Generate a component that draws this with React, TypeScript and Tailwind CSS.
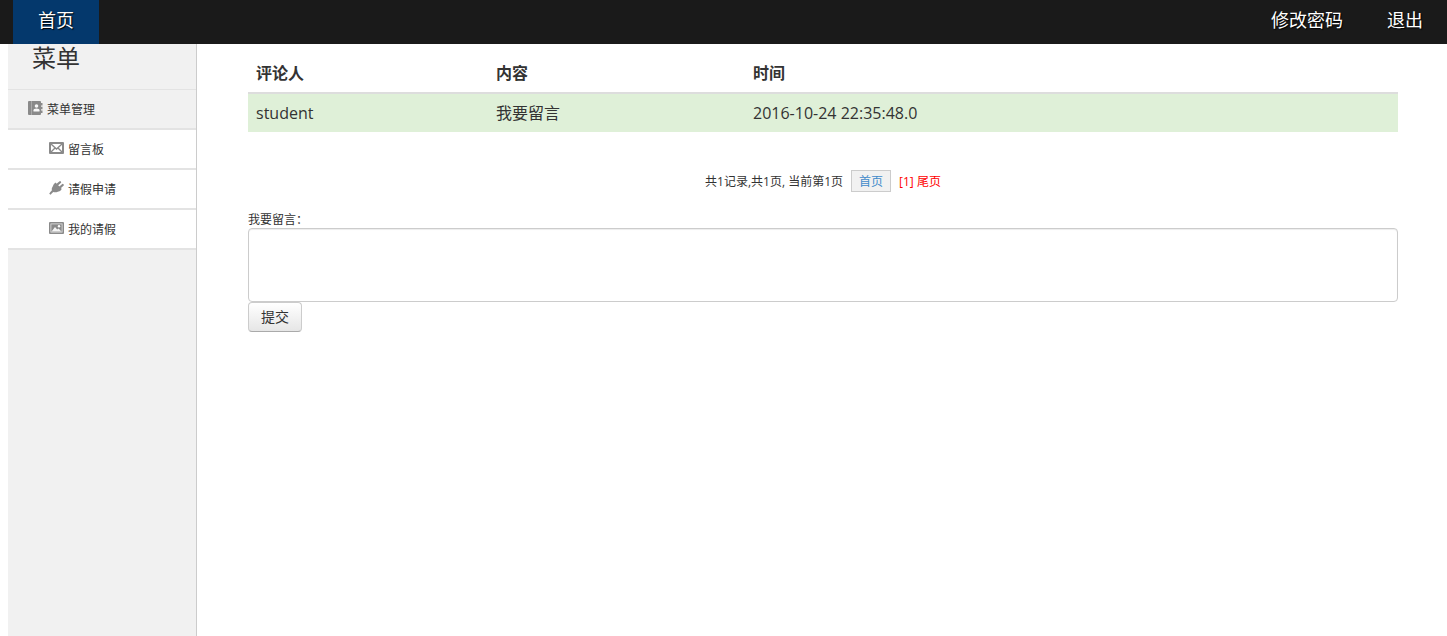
import { useState } from 'react'
import type { ReactNode } from 'react'

type MenuItem = { label: string; icon: ReactNode }
type Comment = { author: string; content: string; time: string }

const comments: Comment[] = [
  { author: 'student', content: '我要留言', time: '2016-10-24 22:35:48.0' },
]

const BookIcon = () => (
  <svg viewBox="0 0 15 14" className="mb-0.5 h-3.5 w-[15px] shrink-0" aria-hidden="true">
    <path
      d="M1 0H12Q13 0 13 1V2H14.5V4.5H13V5.7H14.5V8.3H13V9.5H14.5V12H13V13Q13 14 12 14H1Q0 14 0 13V1Q0 0 1 0Z"
      fill="#8a8a8a"
    />
    <path d="M3.5 0V14" stroke="#b8b8b8" strokeWidth="0.7" />
    <circle cx="8.5" cy="5" r="1.8" fill="#f8f8f8" />
    <path d="M5.5 10.5V9.3Q5.5 7.4 8.5 7.4Q11.5 7.4 11.5 9.3V10.5Z" fill="#f8f8f8" />
  </svg>
)

const MailIcon = () => (
  <svg viewBox="0 0 15 12" className="mb-0.5 h-3 w-[15px] shrink-0" aria-hidden="true">
    <rect width="15" height="12" rx="1" fill="#8a8a8a" />
    <rect x="2" y="2" width="11" height="8" fill="#fff" />
    <path d="M2 2L7.5 7L13 2M2 10L6 6M13 10L9 6" stroke="#8a8a8a" strokeWidth="1.4" fill="none" />
  </svg>
)

const PlugIcon = () => (
  <svg viewBox="0 0 15 14" className="mb-0.5 h-3.5 w-[15px] shrink-0" aria-hidden="true">
    <path
      d="M6.5 1.6L12.8 7.9Q11.5 10.4 8.8 10.7Q6.4 11.8 4.3 11Q2.8 12 1.7 13.8L0.2 12.7Q1.2 10.6 2.8 9.4Q2.4 7.3 3.7 5.6Q4.4 3 6.5 1.6Z"
      fill="#8a8a8a"
    />
    <path d="M8.3 3.6L11 1.2M11 6.4L13.7 4" stroke="#8a8a8a" strokeWidth="2.2" strokeLinecap="round" />
  </svg>
)

const PictureIcon = () => (
  <svg viewBox="0 0 15 12" className="mb-0.5 h-3 w-[15px] shrink-0" aria-hidden="true">
    <rect width="15" height="12" rx="1" fill="#8a8a8a" />
    <rect x="1.9" y="1.9" width="11.2" height="8.2" fill="none" stroke="#e4e4e4" strokeWidth="0.8" />
    <path d="M2.6 9.6L6 5L8.2 7.6L9.6 6.6L12.4 9.6Z" fill="#f4f4f4" />
    <circle cx="10" cy="4.3" r="1.2" fill="#fff" />
  </svg>
)

const menuItems: MenuItem[] = [
  { label: '留言板', icon: <MailIcon /> },
  { label: '请假申请', icon: <PlugIcon /> },
  { label: '我的请假', icon: <PictureIcon /> },
]

function NavBar() {
  return (
    <nav className="flex h-11 items-stretch justify-between bg-[#1a1a1a] pr-0.5 pl-[13px] text-lg text-white [text-shadow:1px_1px_1px_#000]">
      <a href="#home" className="flex items-center bg-[#04386c] px-[25px] pb-1">
        首页
      </a>
      <div className="flex">
        <a href="#password" className="flex items-center px-[22px] pb-1">
          修改密码
        </a>
        <a href="#logout" className="flex items-center px-[22px] pb-1">
          退出
        </a>
      </div>
    </nav>
  )
}

function SideBar() {
  return (
    <aside className="ml-2 w-[189px] shrink-0 border-r border-[#ccc] bg-[#f1f1f1]">
      <h2 className="border-b border-[#e3e3e3] pb-[18px] pl-6 text-2xl leading-[27px]">菜单</h2>
      <a
        href="#menu"
        className="flex h-10 items-center gap-1 border-b-2 border-[#e3e3e3] pl-5 text-xs"
      >
        <BookIcon />
        <span className="pt-0.5">菜单管理</span>
      </a>
      <ul>
        {menuItems.map((item) => (
          <li key={item.label}>
            <a
              href={`#${item.label}`}
              className="flex h-10 items-center gap-1 border-b-2 border-[#e3e3e3] bg-white pl-[41px] text-xs"
            >
              {item.icon}
              <span className="pt-0.5">{item.label}</span>
            </a>
          </li>
        ))}
      </ul>
    </aside>
  )
}

function CommentTable() {
  return (
    <table className="w-full table-fixed text-left text-base leading-[22px]">
      <thead>
        <tr className="border-b-2 border-[#ddd]">
          <th className="w-60 p-2 font-bold">评论人</th>
          <th className="w-[257px] p-2 font-bold">内容</th>
          <th className="p-2 font-bold">时间</th>
        </tr>
      </thead>
      <tbody>
        {comments.map((comment) => (
          <tr key={comment.time} className="bg-[#dff0d8]">
            <td className="p-2">{comment.author}</td>
            <td className="p-2">{comment.content}</td>
            <td className="p-2">{comment.time}</td>
          </tr>
        ))}
      </tbody>
    </table>
  )
}

function Pagination() {
  return (
    <div className="mt-[38px] flex items-center justify-center text-xs">
      <span className="pt-0.5">共1记录,共1页, 当前第1页</span>
      <a
        href="#first"
        className="mx-2 flex h-[22px] items-center border border-[#ccc] bg-[#f1f1f1] px-[7px] pt-0.5 text-[#428bca]"
      >
        首页
      </a>
      <span className="pt-0.5 text-[#f00]">
        [1]{' '}
        <a href="#last">尾页</a>
      </span>
    </div>
  )
}

function MessageForm() {
  const [message, setMessage] = useState('')

  return (
    <form className="mt-[19px]" onSubmit={(event) => event.preventDefault()}>
      <label htmlFor="message" className="block text-xs leading-[17px]">
        我要留言：
      </label>
      <textarea
        id="message"
        value={message}
        onChange={(event) => setMessage(event.target.value)}
        className="block h-[74px] w-full resize-none rounded border border-[#ccc] bg-white px-2 py-1 text-sm shadow-[inset_0_1px_1px_rgba(0,0,0,0.075)]"
      />
      <button
        type="submit"
        className="block h-[30px] rounded border border-[#ccc] border-b-[#aaa] bg-linear-to-b from-white to-[#e6e6e6] px-3 text-sm"
      >
        提交
      </button>
    </form>
  )
}

export default function App() {
  return (
    <div className="flex min-h-screen flex-col bg-white font-['Open_Sans','Noto_Sans_CJK_SC',sans-serif] text-[#333]">
      <NavBar />
      <div className="flex grow">
        <SideBar />
        <main className="min-w-0 grow pt-2.5 pr-[49px] pl-[51px]">
          <CommentTable />
          <Pagination />
          <MessageForm />
        </main>
      </div>
    </div>
  )
}
